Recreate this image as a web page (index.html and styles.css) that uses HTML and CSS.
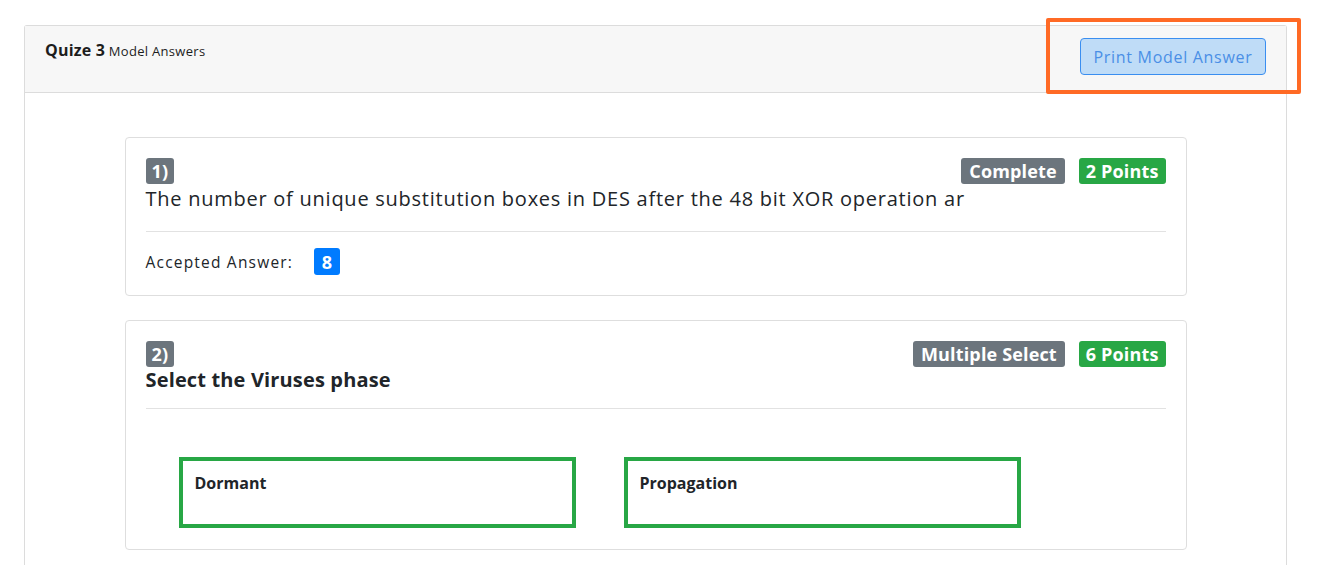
FILE: index.html
```html
<!DOCTYPE html>
<html>
<head>
<meta charset="utf-8">
<link rel="stylesheet" href="styles.css">
</head>
<body>
<div class="page">
  <div class="panel">
    <div class="panel-header">
      <div class="panel-title"><strong>Quize 3</strong> <span class="sub">Model Answers</span></div>
      <button class="btn-print">Print Model Answer</button>
    </div>
    <div class="panel-body">
      <div class="qcard">
        <div class="qhead">
          <span class="badge badge-gray badge-num">1)</span>
          <div class="qtags">
            <span class="badge badge-gray">Complete</span>
            <span class="badge badge-green">2 Points</span>
          </div>
        </div>
        <div class="qtext">The number of unique substitution boxes in DES after the 48 bit XOR operation ar</div>
        <hr class="sep">
        <div class="answer-row">
          <span class="answer-label">Accepted Answer:</span>
          <span class="badge badge-blue">8</span>
        </div>
      </div>
      <div class="qcard qcard-last">
        <div class="qhead">
          <span class="badge badge-gray badge-num">2)</span>
          <div class="qtags">
            <span class="badge badge-gray">Multiple Select</span>
            <span class="badge badge-green">6 Points</span>
          </div>
        </div>
        <div class="qtext qtext-bold">Select the Viruses phase</div>
        <hr class="sep sep-tight">
        <div class="options">
          <div class="option">Dormant</div>
          <div class="option">Propagation</div>
        </div>
      </div>
    </div>
  </div>
  <div class="highlight"></div>
</div>
</body>
</html>
```
FILE: styles.css
```css
html, body {
  margin: 0;
  padding: 0;
  background: #ffffff;
}
body {
  font-family: "Open Sans", "Noto Sans", sans-serif;
  color: #212529;
  overflow: hidden;
}
.page {
  position: relative;
  padding: 25px 31px 0 24px;
  height: 565px;
  box-sizing: border-box;
}
.panel {
  border: 1px solid #dcdcdc;
  border-radius: 3px 3px 0 0;
  border-bottom: none;
  height: 540px;
  box-sizing: border-box;
}
.panel-header {
  background: #f7f7f7;
  border-bottom: 1px solid #dcdcdc;
  display: flex;
  justify-content: space-between;
  align-items: flex-start;
  padding: 12px 20px 16px 20px;
  height: 67px;
  box-sizing: border-box;
}
.panel-title {
  margin-top: 1px;
  font-size: 13px;
  letter-spacing: 0.3px;
  color: #1d1d1d;
}
.panel-title strong {
  font-size: 16px;
  font-weight: 700;
  letter-spacing: 0.2px;
}
.btn-print {
  font-family: inherit;
  font-size: 16px;
  letter-spacing: 0.7px;
  color: #4a8fe6;
  background: #bfdcf7;
  border: 1px solid #3a8ef0;
  border-radius: 4px;
  width: 186px;
  height: 37px;
  padding: 0;
  cursor: pointer;
}
.panel-body {
  padding: 44px 0 0 0;
}
.qcard {
  width: 1062px;
  margin: 0 auto 24px auto;
  border: 1px solid #dedede;
  border-radius: 4px;
  padding: 20px 20px 20px 20px;
  box-sizing: border-box;
}
.qhead {
  display: flex;
  justify-content: space-between;
  align-items: flex-start;
}
.qtags {
  display: flex;
  gap: 14px;
}
.badge {
  display: inline-flex;
  align-items: center;
  justify-content: center;
  height: 26px;
  padding: 0 8px;
  border-radius: 3px;
  font-size: 18px;
  font-weight: 700;
  color: #ffffff;
  box-sizing: border-box;
  letter-spacing: 0.15px;
}
.badge-num { padding: 0 6px; }
.badge-gray { background: #6c757d; }
.badge-green { background: #28a745; padding: 0 7px; }
.badge-blue {
  background: #007bff;
  width: 26px;
  height: 27px;
  padding: 0;
}
.qtext {
  font-size: 20px;
  line-height: 30px;
  letter-spacing: 0.75px;
}
.qtext-bold {
  font-weight: 700;
  line-height: 28px;
  letter-spacing: 0.15px;
  margin-top: -1px;
}
.sep {
  border: none;
  border-top: 1px solid #e2e2e2;
  margin: 17px 0 16px 0;
}
.sep-tight {
  margin-top: 14px;
}
.answer-row {
  display: flex;
  align-items: center;
  gap: 21px;
  font-size: 15px;
  letter-spacing: 1.2px;
}
.answer-label {
  font-size: 15.5px;
}
.options {
  display: flex;
  gap: 48px;
  padding: 32px 0 1px 33px;
}
.option {
  width: 397px;
  height: 71px;
  box-sizing: border-box;
  border: 4px solid #28a745;
  padding: 11px 12px;
  font-size: 16px;
  font-weight: 700;
  color: #212529;
}
.highlight {
  position: absolute;
  left: 1046px;
  top: 18px;
  width: 255px;
  height: 76px;
  box-sizing: border-box;
  border: 4px solid #ff6a25;
  border-radius: 2px;
}
```
